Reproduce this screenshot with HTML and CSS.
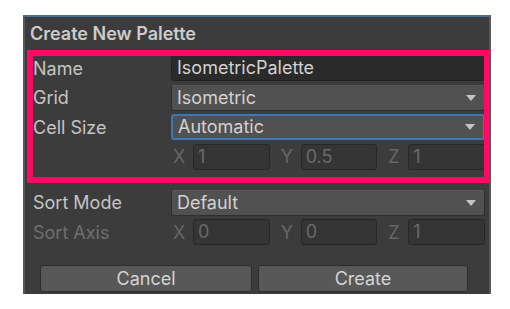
FILE: index.html
```html
<!DOCTYPE html>
<html lang="en">
<head>
  <meta charset="UTF-8">
  <title>Create New Palette</title>
  <link rel="stylesheet" href="styles.css">
</head>
<body>

  <div class="panel">
    <div class="title">Create New Palette</div>

    <div class="form">
      <div class="row">
        <label>Name</label>
        <div class="text-field">IsometricPalette</div>
      </div>
      <div class="row">
        <label>Grid</label>
        <div class="dropdown">Isometric<span class="arrow"></span></div>
      </div>
      <div class="row">
        <label>Cell Size</label>
        <div class="dropdown focused">Automatic<span class="arrow"></span></div>
      </div>
      <div class="row">
        <label></label>
        <div class="vector">
          <div class="comp"><span class="axis">X</span><div class="num">1</div></div>
          <div class="comp"><span class="axis">Y</span><div class="num">0.5</div></div>
          <div class="comp"><span class="axis">Z</span><div class="num">1</div></div>
        </div>
      </div>

      <div class="row spaced">
        <label>Sort Mode</label>
        <div class="dropdown">Default<span class="arrow"></span></div>
      </div>
      <div class="row">
        <label class="disabled">Sort Axis</label>
        <div class="vector">
          <div class="comp"><span class="axis">X</span><div class="num">0</div></div>
          <div class="comp"><span class="axis">Y</span><div class="num">0</div></div>
          <div class="comp"><span class="axis">Z</span><div class="num">1</div></div>
        </div>
      </div>

      <div class="buttons">
        <button class="cancel">Cancel</button>
        <button class="create">Create</button>
      </div>
    </div>

    <div class="highlight"></div>
  </div>

</body>
</html>
```

FILE: styles.css
```css
* {
  box-sizing: border-box;
}
body {
  margin: 0;
  background-color: white;
  font-family: Inter, "Noto Sans", sans-serif;
}
.panel {
  position: relative;
  margin: 15px 0 0 23px;
  width: 468px;
  height: 279px;
  background-color: #3c3c3c;
  border-top: 2px solid #4a6e9c;
  border-left: 2px solid #585858;
  border-right: 2px solid #585858;
}
.title {
  height: 33px;
  line-height: 34px;
  padding-left: 5px;
  font-size: 18px;
  font-weight: 600;
  color: #cbcbcb;
}
.form {
  padding: 5px 4px 0 8px;
}
.row {
  display: flex;
  align-items: center;
  height: 26px;
  margin-bottom: 3.5px;
}
.row.spaced {
  margin-top: 20px;
}
.row label {
  width: 138px;
  flex-shrink: 0;
  font-size: 18px;
  color: #c4c4c4;
}
.row label.disabled {
  color: #6f6f6f;
}
.text-field, .dropdown {
  flex: 1;
  height: 26px;
  line-height: 24px;
  padding-left: 5px;
  border-radius: 3px;
  font-size: 18px;
  color: #d2d2d2;
  position: relative;
}
.text-field {
  background-color: #2a2a2a;
  border: 1px solid #212121;
}
.dropdown {
  background-color: #515151;
  border: 1px solid #2e2e2e;
  border-top-color: #5a5a5a;
}
.dropdown.focused {
  line-height: 22px;
  border: 2px solid #3d77b4;
}
.arrow {
  position: absolute;
  right: 8px;
  top: 50%;
  margin-top: -3px;
  border-left: 5px solid transparent;
  border-right: 5px solid transparent;
  border-top: 6px solid #c4c4c4;
}
.vector {
  flex: 1;
  display: flex;
  gap: 9px;
  height: 26px;
}
.comp {
  flex: 1;
  display: flex;
  align-items: center;
}
.axis {
  width: 22px;
  flex-shrink: 0;
  padding-left: 2px;
  font-size: 18px;
  color: #666;
}
.num {
  flex: 1;
  height: 26px;
  line-height: 24px;
  padding-left: 4px;
  background-color: #353535;
  border: 1px solid #272727;
  border-radius: 3px;
  font-size: 18px;
  color: #6a6a6a;
}
.buttons {
  display: flex;
  gap: 6px;
  margin: 20px 0 0 7px;
}
.buttons button {
  height: 27px;
  background-color: #585858;
  border: 1px solid #2c2c2c;
  border-radius: 3px;
  font-family: Inter, "Noto Sans", sans-serif;
  font-size: 18px;
  color: #d4d4d4;
}
.buttons .cancel {
  width: 212px;
}
.buttons .create {
  width: 210px;
}
.highlight {
  position: absolute;
  left: 2px;
  top: 33px;
  width: 463px;
  height: 133px;
  border: 6px solid #fe0a64;
  pointer-events: none;
}
```
